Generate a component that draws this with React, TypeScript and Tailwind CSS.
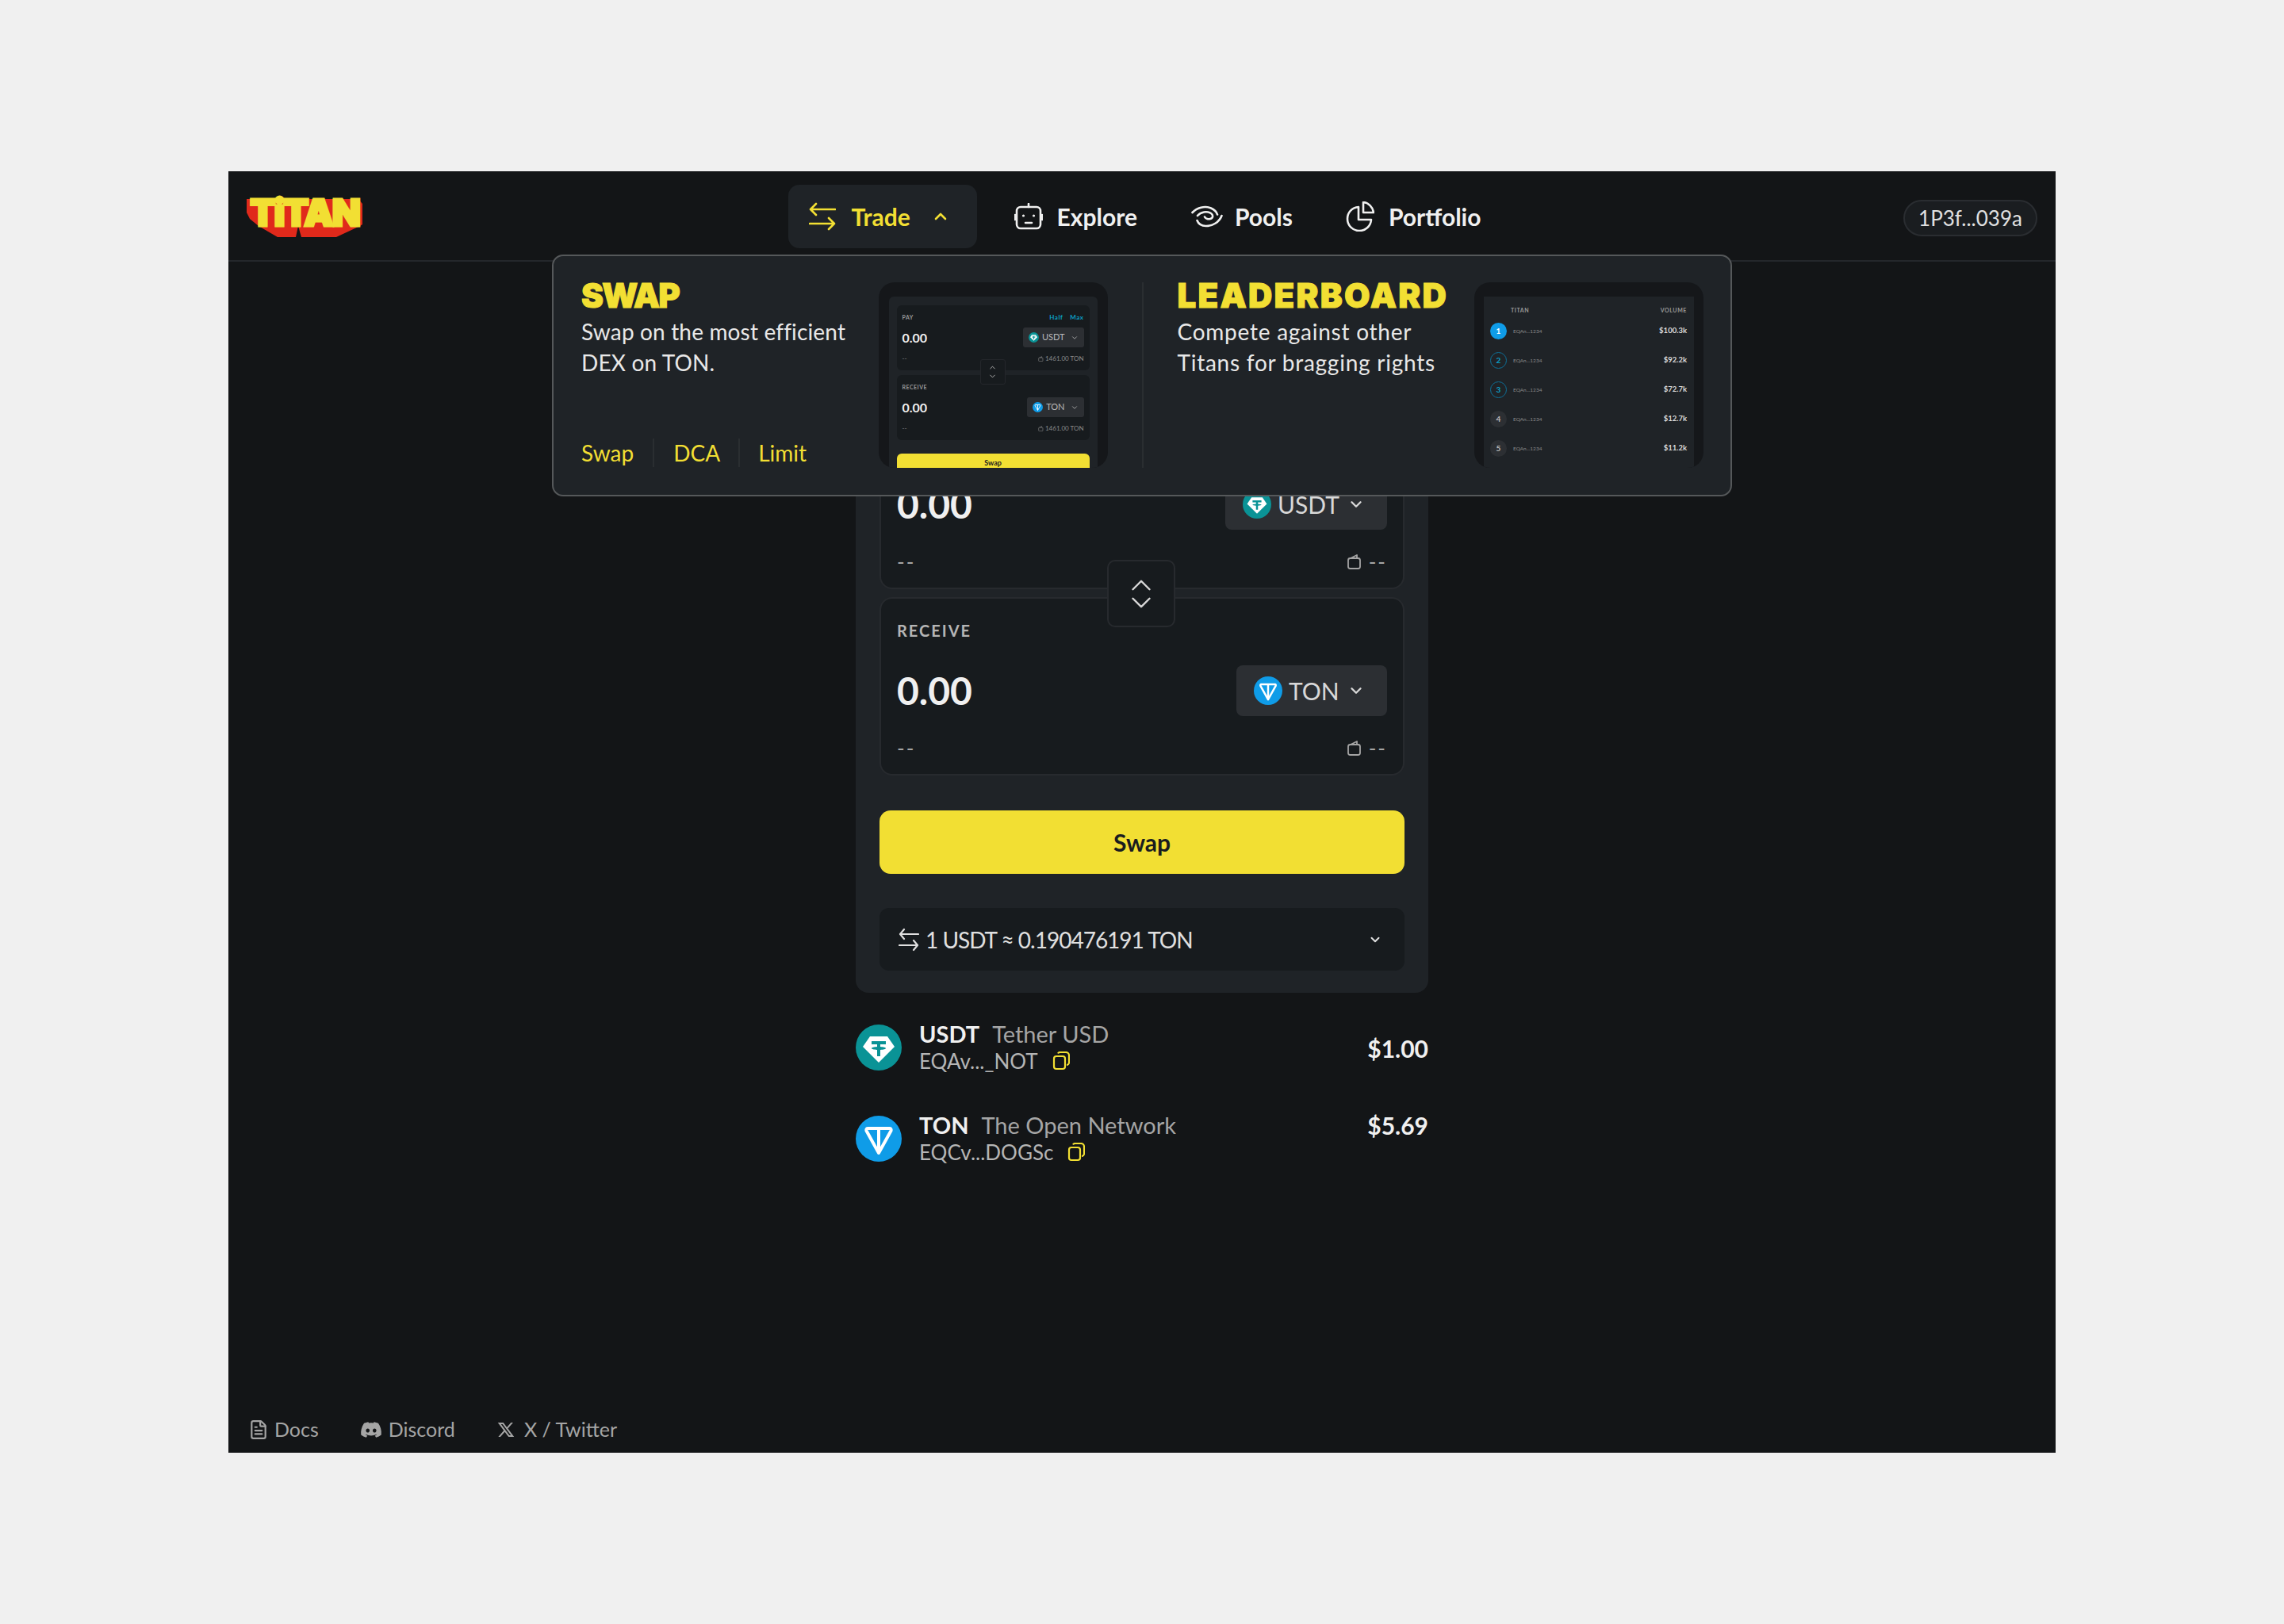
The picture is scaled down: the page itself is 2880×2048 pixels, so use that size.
import React from 'react';
import { ChevronDown, ChevronUp, FileText } from 'lucide-react';
import { FaDiscord } from 'react-icons/fa';
import { RiTwitterXLine } from 'react-icons/ri';

const TradeIcon = () => (
  <svg width="34" height="36" viewBox="0 0 34 36" fill="none" stroke="currentColor" strokeWidth="2.6" strokeLinecap="round" strokeLinejoin="round">
    <path d="M33 9H2M9 2L2 9l7 7" />
    <path d="M1 27h31M25 20l7 7-7 7" />
  </svg>
);

const RobotIcon = () => (
  <svg width="36" height="34" viewBox="0 0 36 34" fill="none" stroke="currentColor" strokeWidth="2.6" strokeLinecap="round">
    <rect x="3" y="5" width="30" height="27" rx="5" />
    <path d="M18 1v4M1 15v6M35 15v6M14 25h8" />
    <circle cx="11.5" cy="16" r="1.6" fill="currentColor" stroke="none" />
    <circle cx="24.5" cy="16" r="1.6" fill="currentColor" stroke="none" />
  </svg>
);

const PoolsIcon = () => (
  <svg width="40" height="28" viewBox="0 0 40 28" fill="none" stroke="currentColor" strokeWidth="2.6" strokeLinecap="round" className="mr-[-3px]">
    <path d="M1.5 9C7 3 17 0 25 3.5c4 1.8 7 4.5 8 8" />
    <path d="M8 13c4-5 12-6 17-3 3 2 3 6-1 7-3 .8-6-.5-7-2.500" />
    <path d="M38.500 13c-3 8-11 13-20 13-6 0-9.500-3-11-7" />
  </svg>
);

const PortfolioIcon = () => (
  <svg width="36" height="38" viewBox="0 0 36 38" fill="none" stroke="currentColor" strokeWidth="2.6" strokeLinejoin="round">
    <path d="M16 7C8 7.500 2 14 2 22c0 8.500 6.800 15 15 15 8 0 14.500-6 15-14H16V7z" />
    <path d="M22 1c6.500.5 12 6 13 13H22V1z" />
  </svg>
);

const CopyIcon = () => (
  <svg width="22" height="24" viewBox="0 0 22 24" fill="none" stroke="#f2df33" strokeWidth="2.2">
    <rect x="2" y="6" width="14" height="16" rx="3" />
    <path d="M7 2.500C7.500 1.500 8.500 1 9.500 1H17c2 0 4 1.500 4 4v9c0 1.500-1.500 3-3 3" />
  </svg>
);

const WalletIcon = ({ size = 20 }: { size?: number }) => (
  <svg width={size} height={size} viewBox="0 0 20 20" fill="none" stroke="currentColor" strokeWidth="1.8" strokeLinejoin="round">
    <rect x="2" y="6" width="15" height="13" rx="2.500" />
    <path d="M5 6l8-4v4" />
  </svg>
);

const SwapSmallIcon = () => (
  <svg width="26" height="30" viewBox="0 0 26 30" fill="none" stroke="currentColor" strokeWidth="2.200" strokeLinecap="round" strokeLinejoin="round">
    <path d="M25 8H2M7 2L2 8l5 6" />
    <path d="M1 22h23M19 16l5 6-5 6" />
  </svg>
);

const UsdtIcon = ({ size }: { size: number }) => (
  <svg width={size} height={size} viewBox="0 0 58 58">
    <circle cx="29" cy="29" r="29" fill="#0a9396" />
    <path d="M18 15h22l9 13-20 20L9 28z" fill="#fff" />
    <path d="M20 21h18v4h-7v3c4 .3 7 1 7 2s-3 1.700-7 2v8h-4v-8c-4-.3-7-1-7-2s3-1.700 7-2v-3h-7z" fill="#0a9396" />
  </svg>
);

const TonIcon = ({ size }: { size: number }) => (
  <svg width={size} height={size} viewBox="0 0 58 58">
    <circle cx="29" cy="29" r="29" fill="#0f9ce8" />
    <path d="M15 16h28c1.500 0 2 1.500 1.500 3L29 47 13.500 19c-.5-1.500 0-3 1.500-3z" fill="none" stroke="#fff" strokeWidth="4" strokeLinejoin="round" />
    <path d="M29 17v29" stroke="#fff" strokeWidth="4" />
  </svg>
);

const Logo = () => (
  <div className="relative w-[148px] h-[52px]">
    <svg width="148" height="52" viewBox="0 0 148 52" className="absolute left-0 top-0">
      <path d="M1 3h141l5 6v26l-3 2-30 14H70l-4-14-3 14H40L16 37 5 28 1 20z" fill="#e0291b" />
    </svg>
    <span className="absolute left-[1px] top-[-5px] w-[146px] text-center font-['Inter',sans-serif] text-[47px] leading-[50px] font-black tracking-[-2px] text-[#f2df33] [-webkit-text-stroke:3px_#f2df33]">TiTAN</span>
  </div>
);

const NavItem = ({ icon, label, className = '' }: { icon: React.ReactNode; label: string; className?: string }) => (
  <div className={`flex items-center gap-[18px] px-[26px] h-[80px] text-[#f0f0f0] text-[30px] font-bold ${className}`}>
    {icon}
    <span>{label}</span>
  </div>
);

const Title = ({ children, className }: { children: React.ReactNode; className: string }) => (
  <h3 className={`mt-[-5px] font-['Inter',sans-serif] text-[42px] leading-[44px] font-black text-[#f2df33] uppercase [-webkit-text-stroke:1px_#f2df33] ${className}`}>{children}</h3>
);

const MiniBox = ({ label, token, right }: { label: string; token: React.ReactNode; right?: boolean }) => (
  <div className="h-[82px] rounded-[6px] bg-[#171b1e] px-[7px] pt-[9px] text-[#f0f0f0]">
    <div className="flex justify-between h-[12px] items-center text-[7px] font-bold tracking-[0.5px] text-[#9a9a9a]">
      <span>{label}</span>
      {right && <span className="text-[#0aa0c8] text-[8px] flex gap-[9px]"><span>Half</span><span>Max</span></span>}
    </div>
    <div className="flex justify-between items-center mt-[7px]">
      <span className="text-[16px] font-bold">0.00</span>
      {token}
    </div>
    <div className="flex justify-between items-center mt-[8px] text-[8px] text-[#8a8a8a]">
      <span>--</span>
      <span className="flex items-center gap-[2px]"><WalletIcon size={7} />1461.00 TON</span>
    </div>
  </div>
);

const MiniPill = ({ icon, label }: { icon: React.ReactNode; label: string }) => (
  <div className="h-[25px] rounded-[3px] bg-[#2c2f33] flex items-center gap-[4px] px-[7px] text-[11px] text-[#bbbbbb]">
    {icon}
    <span>{label}</span>
    <ChevronDown size={10} className="ml-[3px]" />
  </div>
);

const SwapPreview = () => (
  <div className="w-[289px] h-[234px] rounded-[20px] bg-[#15171a] overflow-hidden pt-[18px] px-[13px]">
    <div className="relative h-full rounded-t-[6px] bg-[#1f2327] px-[10px] pt-[11px]">
      <MiniBox label="PAY" right token={<MiniPill icon={<UsdtIcon size={13} />} label="USDT" />} />
      <div className="h-[6px]" />
      <MiniBox label="RECEIVE" token={<MiniPill icon={<TonIcon size={13} />} label="TON" />} />
      <div className="absolute left-[115px] top-[79px] w-[32px] h-[32px] rounded-[3px] bg-[#171b1e] border border-[#24272b] flex flex-col items-center justify-center text-[#bbbbbb]">
        <ChevronUp size={11} />
        <ChevronDown size={11} />
      </div>
      <div className="mt-[17px] h-[24px] rounded-t-[6px] bg-[#f2df33] text-center text-[#1a1c1f] text-[9px] font-bold pt-[5px]">Swap</div>
    </div>
  </div>
);

const leaders = [
  { n: 1, amount: '$100.3k', cls: 'bg-[#0f9ce8] text-white' },
  { n: 2, amount: '$92.2k', cls: 'border border-[#0e6f96] text-[#0aa0c8]' },
  { n: 3, amount: '$72.7k', cls: 'border border-[#0e6f96] text-[#0aa0c8]' },
  { n: 4, amount: '$12.7k', cls: 'bg-[#2c2f33] text-[#bbbbbb]' },
  { n: 5, amount: '$11.2k', cls: 'bg-[#2c2f33] text-[#bbbbbb]' },
];

const LeaderPreview = () => (
  <div className="w-[289px] h-[234px] rounded-[20px] bg-[#15171a] overflow-hidden pt-[18px] px-[12px]">
    <div className="h-full bg-[#1f2327] pl-[8px] pr-[9px] pt-[11px]">
      <div className="flex justify-between h-[12px] items-center pl-[26px] text-[7px] font-bold tracking-[0.6px] text-[#9a9a9a]">
        <span>TITAN</span>
        <span>VOLUME</span>
      </div>
      <div className="mt-[10px] flex flex-col gap-[16px]">
        {leaders.map((l) => (
          <div key={l.n} className="flex items-center h-[21px]">
            <span className={`w-[21px] h-[21px] rounded-full flex items-center justify-center text-[10px] font-bold ${l.cls}`}>{l.n}</span>
            <span className="ml-[8px] text-[6.500px] text-[#8a8a8a]">EQAn...1234</span>
            <span className="ml-auto text-[9.500px] font-bold text-[#dddddd]">{l.amount}</span>
          </div>
        ))}
      </div>
    </div>
  </div>
);

const TradeMenu = () => (
  <div className="absolute left-[408px] top-[105px] z-10 w-[1488px] h-[305px] rounded-[14px] border-2 border-[#55585a] bg-[#1f2327] pt-[33px] pl-[35px] pr-[34px] flex">
    <div className="flex-1 flex justify-between">
      <div className="flex flex-col h-[234px]">
        <Title className="tracking-[-2px]">SWAP</Title>
        <p className="mt-[4px] text-[28px] leading-[39px] font-normal tracking-[0.15px] text-[#e8e8e8] whitespace-pre-line">{'Swap on the most efficient\nDEX on TON.'}</p>
        <div className="mt-auto mb-[1px] flex items-center text-[28px] leading-[36px] text-[#f2df33]">
          <span>Swap</span>
          <span className="mx-[24px] w-[2px] h-[36px] bg-[#2a2e31]" />
          <span>DCA</span>
          <span className="mx-[23px] w-[2px] h-[36px] bg-[#2a2e31]" />
          <span>Limit</span>
        </div>
      </div>
      <SwapPreview />
    </div>
    <div className="mx-[43px] w-[2px] h-[234px] bg-[#2a2e31]" />
    <div className="flex-1 flex justify-between">
      <div className="flex flex-col h-[234px]">
        <Title className="tracking-[2.2px]">LEADERBOARD</Title>
        <p className="mt-[4px] text-[28px] leading-[39px] font-normal tracking-[0.75px] text-[#e8e8e8] whitespace-pre-line">{'Compete against other\nTitans for bragging rights'}</p>
      </div>
      <LeaderPreview />
    </div>
  </div>
);

const SwapBox = ({ label, token, icon, pillWidth }: { label: string; token: string; icon: React.ReactNode; pillWidth: string }) => (
  <div className="h-[225px] rounded-[16px] border-2 border-[#272a2e] bg-[#171b1e] px-[20px] pt-[28px]">
    <div className="h-[24px] flex items-center text-[20px] font-bold tracking-[2px] text-[#b5b5b5]">{label}</div>
    <div className="mt-[32px] h-[64px] flex items-center justify-between">
      <span className="text-[48px] font-bold text-[#f0f0f0]">0.00</span>
      <div className={`h-[64px] ${pillWidth} rounded-[8px] bg-[#2c2f33] flex items-center pl-[22px] gap-[8px] text-[30px] text-[#d8d8d8]`}>
        {icon}
        <span>{token}</span>
        <ChevronDown size={22} strokeWidth={2.6} className="ml-auto mr-[28px]" />
      </div>
    </div>
    <div className="mt-[28px] h-[24px] flex items-center justify-between text-[26px] tracking-[2px] text-[#a5a5a5]">
      <span>--</span>
      <span className="flex items-center gap-[8px]"><WalletIcon size={20} />--</span>
    </div>
  </div>
);

const TokenRow = ({ icon, symbol, name, address, price, priceTop }: { icon: React.ReactNode; symbol: string; name: string; address: string; price: string; priceTop: string }) => (
  <div className="flex h-[58px]">
    {icon}
    <div className="ml-[22px] flex flex-col justify-between">
      <div className="flex items-center gap-[16px] h-[24px] text-[29px]">
        <span className="font-bold text-[#f0f0f0]">{symbol}</span>
        <span className="text-[#a5a5a5]">{name}</span>
      </div>
      <div className="flex items-center gap-[18px] h-[24px] text-[26px] text-[#b5b5b5]">
        <span>{address}</span>
        <CopyIcon />
      </div>
    </div>
    <span className={`ml-auto ${priceTop} h-[24px] flex items-center text-[30px] font-bold text-[#f0f0f0]`}>{price}</span>
  </div>
);

export default function App() {
  return (
    <div className="min-h-screen bg-[#f0f0f0] flex items-center justify-center font-['Lato','Liberation_Sans',sans-serif]">
      <div className="relative w-[2304px] h-[1616px] bg-[#131517] flex flex-col">
        <header className="h-[114px] shrink-0 border-b-2 border-[#24272b] grid grid-cols-[1fr_auto_1fr] items-start pl-[22px] pr-[23px]">
          <div className="mt-[32px]"><Logo /></div>
          <nav className="mt-[17px] pl-[8px] flex items-center gap-[16px]">
            <div className="mr-[5px] flex items-center h-[80px] w-[238px] pl-[26px] rounded-[14px] bg-[#1f2327] text-[#f2df33] text-[30px] font-bold">
              <TradeIcon />
              <span className="ml-[20px]">Trade</span>
              <ChevronUp size={24} strokeWidth={2.6} className="ml-[26px]" />
            </div>
            <NavItem icon={<RobotIcon />} label="Explore" />
            <NavItem icon={<PoolsIcon />} label="Pools" />
            <NavItem icon={<PortfolioIcon />} label="Portfolio" className="ml-[-1px]" />
          </nav>
          <div className="mt-[36px] justify-self-end h-[46px] w-[169px] rounded-full border-2 border-[#2a2d31] bg-[#1a1d20] flex items-center justify-center text-[26px] text-[#e0e0e0]">
            1P3f...039a
          </div>
        </header>

        <TradeMenu />

        <main className="flex-1 flex flex-col items-center">
          <div className="mt-[144px] w-[722px]">
            <div className="rounded-[16px] bg-[#1f2327] px-[30px] pt-[44px] pb-[28px]">
              <div className="relative flex flex-col gap-[10px]">
                <SwapBox label="PAY" token="USDT" icon={<UsdtIcon size={36} />} pillWidth="w-[204px]" />
                <SwapBox label="RECEIVE" token="TON" icon={<TonIcon size={36} />} pillWidth="w-[190px]" />
                <div className="absolute left-[287px] top-[188px] w-[86px] h-[85px] rounded-[10px] border-2 border-[#272a2e] bg-[#171b1e] flex flex-col items-center justify-center text-[#d8d8d8]">
                  <ChevronUp size={42} strokeWidth={1.4} className="mb-[-10px]" />
                  <ChevronDown size={42} strokeWidth={1.4} className="mt-[-10px]" />
                </div>
              </div>
              <button className="mt-[44px] w-full h-[80px] rounded-[14px] bg-[#f2df33] text-[#1a1c1f] text-[30px] font-bold">Swap</button>
              <div className="mt-[43px] h-[79px] rounded-[12px] bg-[#171b1e] flex items-center pl-[24px] pr-[28px] text-[28px] tracking-[-1px] text-[#e0e0e0]">
                <SwapSmallIcon />
                <span className="ml-[8px]">1 USDT ≈ 0.190476191 TON</span>
                <ChevronDown size={18} strokeWidth={2.6} className="ml-auto" />
              </div>
            </div>
            <div className="mt-[40px] flex flex-col gap-[57px]">
              <TokenRow icon={<UsdtIcon size={58} />} symbol="USDT" name="Tether USD" address="EQAv..._NOT" price="$1.00" priceTop="mt-[18px]" />
              <TokenRow icon={<TonIcon size={58} />} symbol="TON" name="The Open Network" address="EQCv...DOGSc" price="$5.69" priceTop="" />
            </div>
          </div>
        </main>

        <footer className="h-[44px] shrink-0 flex items-start pl-[25px] gap-[52px] text-[25px] text-[#a5a5a5]">
          <div className="flex items-center gap-[7px] h-[30px]"><FileText size={26} /><span>Docs</span></div>
          <div className="flex items-center gap-[8px] h-[30px]"><FaDiscord size={28} /><span>Discord</span></div>
          <div className="flex items-center gap-[11px] h-[30px]"><RiTwitterXLine size={24} /><span>X / Twitter</span></div>
        </footer>
      </div>
    </div>
  );
}
